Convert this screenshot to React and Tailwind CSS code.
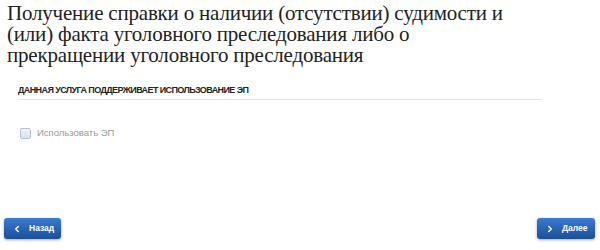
import { ChevronLeft, ChevronRight } from "lucide-react";

export default function App() {
  return (
    <div className="w-[600px] h-[250px] bg-white relative overflow-hidden font-['Liberation_Sans']">
      <div className="px-[7px] pt-[3px]">
        <h1 className="font-['Liberation_Serif'] text-[21px] leading-[21px] tracking-[-0.2px] text-[#222]">
          Получение справки о наличии (отсутствии) судимости и
          <br />
          (или) факта уголовного преследования либо о
          <br />
          прекращении уголовного преследования
        </h1>
      </div>

      <div className="ml-[18px] w-[523px] mt-[19px]">
        <div className="text-[9px] leading-[10px] font-bold tracking-[-0.6px] text-[#222] pb-[4px] border-b border-[#e3e6e8]">
          ДАННАЯ УСЛУГА ПОДДЕРЖИВАЕТ ИСПОЛЬЗОВАНИЕ ЭП
        </div>
        <label className="flex items-center gap-[6px] mt-[26px] ml-[2px]">
          <span className="w-[11px] h-[11px] rounded-[2px] border border-[#b7c3d3] bg-gradient-to-b from-[#eef2f8] to-[#dbe3ee]" />
          <span className="text-[9.5px] text-[#9a9a9a]">Использовать ЭП</span>
        </label>
      </div>

      <div className="absolute left-[4px] right-[5px] top-[218px] flex justify-between">
        <button className="w-[57px] h-[21px] rounded-[3px] bg-gradient-to-b from-[#3a7bd0] to-[#1b4f99] shadow-[0_1px_3px_rgba(0,0,0,0.35)] flex items-center pl-[8px] gap-[7px] text-white text-[8.5px] font-bold">
          <ChevronLeft size={10} strokeWidth={3.5} />
          Назад
        </button>
        <button className="w-[58px] h-[21px] rounded-[3px] bg-gradient-to-b from-[#3a7bd0] to-[#1b4f99] shadow-[0_1px_3px_rgba(0,0,0,0.35)] flex items-center pl-[8px] gap-[7px] text-white text-[8.5px] font-bold">
          <ChevronRight size={10} strokeWidth={3.5} />
          Далее
        </button>
      </div>
    </div>
  );
}
